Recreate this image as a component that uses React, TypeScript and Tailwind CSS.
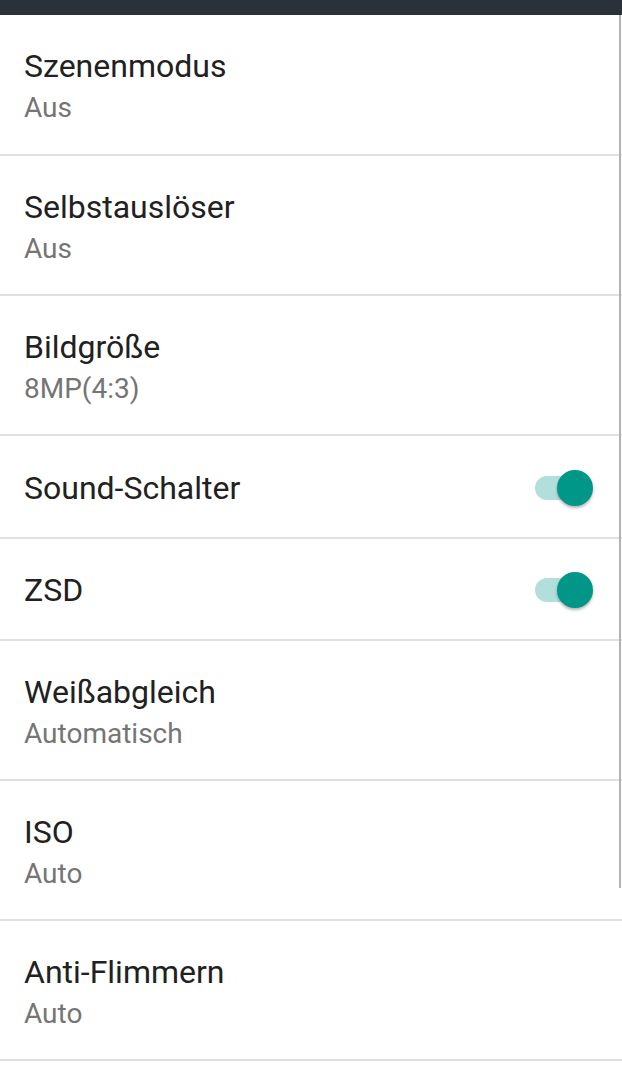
import React from "react";

type Item =
  | { kind: "two"; title: string; sub: string; h: string }
  | { kind: "toggle"; title: string; h: string };

const items: Item[] = [
  { kind: "two", title: "Szenenmodus", sub: "Aus", h: "h-[139px]" },
  { kind: "two", title: "Selbstauslöser", sub: "Aus", h: "h-[138px]" },
  { kind: "two", title: "Bildgröße", sub: "8MP(4:3)", h: "h-[138px]" },
  { kind: "toggle", title: "Sound-Schalter", h: "h-[101px]" },
  { kind: "toggle", title: "ZSD", h: "h-[100px]" },
  { kind: "two", title: "Weißabgleich", sub: "Automatisch", h: "h-[138px]" },
  { kind: "two", title: "ISO", sub: "Auto", h: "h-[138px]" },
  { kind: "two", title: "Anti-Flimmern", sub: "Auto", h: "h-[138px]" },
];

function Toggle() {
  return (
    <div className="relative w-[58px] h-[36px] shrink-0">
      <div className="absolute left-0 top-[6px] w-[52px] h-[24px] rounded-full bg-[#b2dfdb]" />
      <div className="absolute right-0 top-0 w-[36px] h-[36px] rounded-full bg-[#009688] shadow-[0_2px_3px_rgba(0,0,0,0.3)]" />
    </div>
  );
}

export default function App() {
  return (
    <div
      className="relative w-[622px] h-[1080px] bg-white overflow-hidden"
      style={{ fontFamily: "Roboto, 'Noto Sans', sans-serif" }}
    >
      <div className="h-[15px] bg-[#29313b]" />
      <div className="flex flex-col">
        {items.map((it, i) => (
          <React.Fragment key={i}>
            {it.kind === "two" ? (
              <div className={`${it.h} flex flex-col pl-[24px] pt-[32px]`}>
                <div className="text-[32px] leading-[38px] text-[#212121]">{it.title}</div>
                <div className="mt-[6px] text-[28px] leading-[34px] text-[#757575]">{it.sub}</div>
              </div>
            ) : (
              <div className={`${it.h} flex items-center justify-between pl-[24px] pr-[29px] pt-[2px]`}>
                <div className="text-[32px] leading-[38px] text-[#212121]">{it.title}</div>
                <Toggle />
              </div>
            )}
            <div className="h-[2px] bg-[#e0e0e0]" />
          </React.Fragment>
        ))}
      </div>
      <div className="absolute left-[619px] top-[15px] w-[2px] h-[873px] bg-[#b3b3b3]" />
    </div>
  );
}
